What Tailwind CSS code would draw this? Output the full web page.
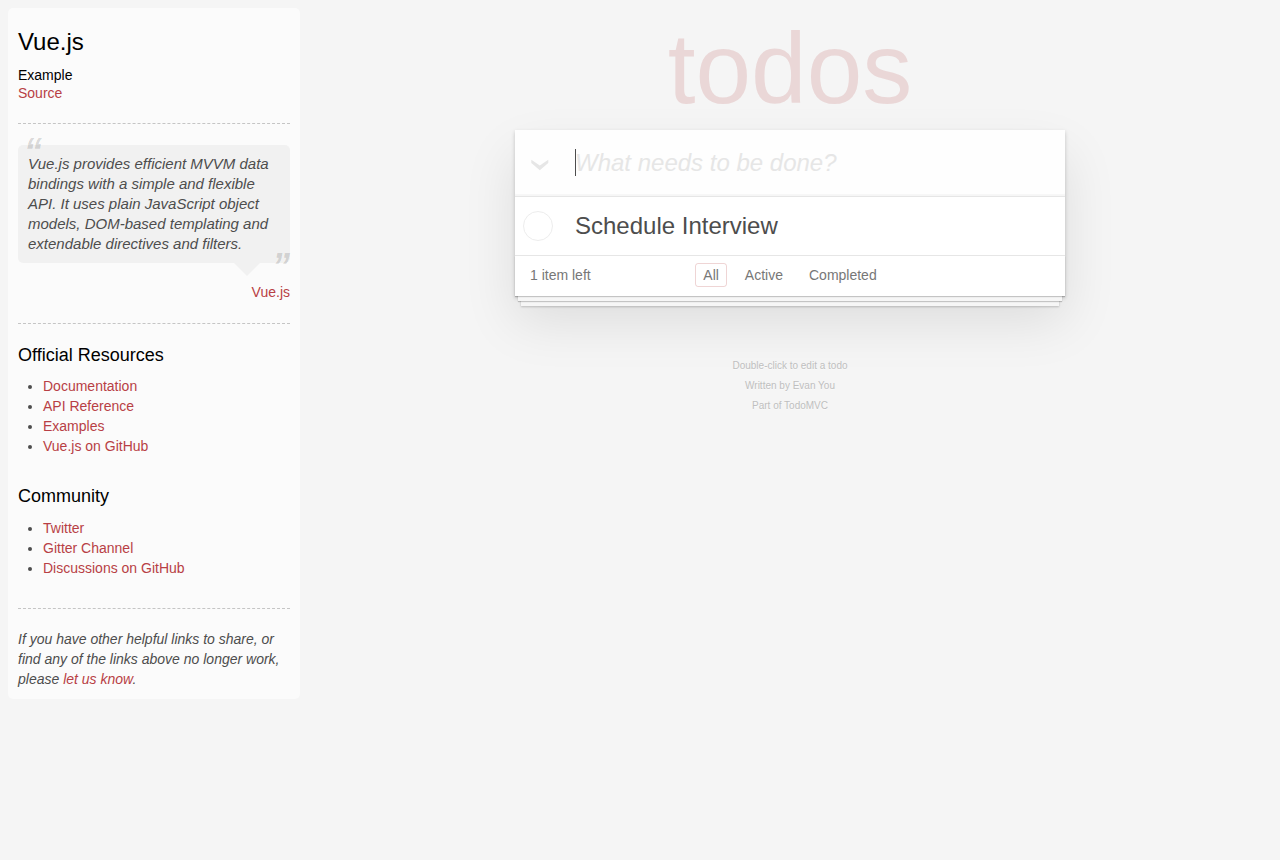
<!DOCTYPE html>
<html lang="en">
<head>
<meta charset="utf-8">
<meta name="viewport" content="width=device-width, initial-scale=1">
<title>Vue.js • TodoMVC</title>
<script src="https://cdn.jsdelivr.net/npm/@tailwindcss/browser@4"></script>
</head>
<body class="flex min-h-screen items-start bg-[#f5f5f5] font-['Liberation_Sans',Arial,sans-serif] text-sm text-[#4d4d4d]">

<aside class="mt-2 ml-2 w-[292px] shrink-0 rounded-[5px] bg-white/60 px-[10px] pt-5 pb-[10px]">
  <header>
    <h3 class="text-2xl leading-7 text-black">Vue.js</h3>
    <h5 class="mt-[10px] leading-[18px] text-black">Example</h5>
    <a href="#source" class="block leading-[18px] text-[#b83f45]">Source</a>
  </header>
  <hr class="my-[21px] border-t border-dashed border-[#c5c5c5]">
  <blockquote class="relative rounded-[5px] bg-black/4 px-[10px] py-[9px] text-[15px] leading-5 italic">
    <span aria-hidden="true" class="absolute -top-[3px] left-[6px] text-4xl leading-5 font-bold text-black/15">“</span>
    <p>Vue.js provides efficient MVVM data bindings with a simple and flexible API. It uses plain JavaScript object models, DOM-based templating and extendable directives and filters.</p>
    <span aria-hidden="true" class="absolute right-0 -bottom-[14px] text-4xl leading-5 font-bold text-black/15">”</span>
    <span aria-hidden="true" class="absolute top-full right-[30px] size-0 border-x-13 border-t-13 border-x-transparent border-t-black/4"></span>
  </blockquote>
  <p class="mt-[19px] text-right leading-5"><a href="#vue" class="text-[#b83f45]">Vue.js</a></p>
  <hr class="mt-[21px] mb-5 border-t border-dashed border-[#c5c5c5]">
  <h4 class="text-lg leading-[22px] text-black">Official Resources</h4>
  <ul class="mt-[10px] list-disc pl-[25px] leading-5">
    <li><a href="#docs" class="text-[#b83f45]">Documentation</a></li>
    <li><a href="#api" class="text-[#b83f45]">API Reference</a></li>
    <li><a href="#examples" class="text-[#b83f45]">Examples</a></li>
    <li><a href="#github" class="text-[#b83f45]">Vue.js on GitHub</a></li>
  </ul>
  <h4 class="mt-[29px] text-lg leading-[22px] text-black">Community</h4>
  <ul class="mt-[11px] list-disc pl-[25px] leading-5">
    <li><a href="#twitter" class="text-[#b83f45]">Twitter</a></li>
    <li><a href="#gitter" class="text-[#b83f45]">Gitter Channel</a></li>
    <li><a href="#discussions" class="text-[#b83f45]">Discussions on GitHub</a></li>
  </ul>
  <hr class="mt-[30px] mb-5 border-t border-dashed border-[#c5c5c5]">
  <p class="leading-5 italic">If you have other helpful links to share, or find any of the links above no longer work, please <a href="#issues" class="text-[#b83f45]">let us know</a>.</p>
</aside>

<div class="min-w-0 flex-1">
  <main class="mx-auto max-w-[550px] pt-[18px]">
    <h1 class="text-center text-[100px] leading-[100px] text-[#af2f2f]/15">todos</h1>

    <section class="relative mt-3 bg-white shadow-[0_2px_4px_rgba(0,0,0,0.2),0_25px_50px_rgba(0,0,0,0.1)]">
      <header class="relative">
        <input type="text" aria-label="New todo" placeholder="What needs to be done?" class="block h-[66px] w-full bg-black/[0.003] pr-4 pl-[60px] text-2xl shadow-[inset_0_-2px_1px_rgba(0,0,0,0.03)] outline-none placeholder:text-[#e6e6e6] placeholder:italic">
        <span aria-hidden="true" class="absolute top-[19px] left-[60px] h-[27px] w-px bg-[#4d4d4d]"></span>
        <label class="absolute top-[29px] left-4 block h-3 w-[18px] cursor-pointer">
          <input type="checkbox" aria-label="Mark all as complete" class="absolute inset-0 appearance-none">
          <svg viewBox="0 0 18 12" class="block h-3 w-[18px]" fill="#e6e6e6" aria-hidden="true"><path d="M.3.8 8.8 6.4 17.3.8V4L8.8 11.2.3 4z"/></svg>
        </label>
      </header>

      <ul class="border-t border-[#e6e6e6]">
        <li class="flex h-[58px] items-center pl-2">
          <input id="todo-1" type="checkbox" class="size-[30px] shrink-0 appearance-none rounded-full border border-[#ededed]">
          <label for="todo-1" class="pl-[22px] text-2xl leading-7">Schedule Interview</label>
        </li>
      </ul>

      <footer class="relative grid grid-cols-[1fr_auto_1fr] items-center border-t border-[#e6e6e6] px-[15px] pt-[7px] pb-[9px] leading-4 text-[#777]">
        <div aria-hidden="true" class="pointer-events-none absolute inset-x-0 bottom-0 h-10 shadow-[0_1px_1px_rgba(0,0,0,0.2),0_8px_0_-3px_#f6f6f6,0_9px_1px_-3px_rgba(0,0,0,0.2),0_16px_0_-6px_#f6f6f6,0_17px_2px_-6px_rgba(0,0,0,0.2)]"></div>
        <span>1 item left</span>
        <ul class="flex gap-[10px]">
          <li><a href="#all" class="block rounded-[3px] border border-[#af2f2f]/20 px-[7px] py-[3px]">All</a></li>
          <li><a href="#active" class="block rounded-[3px] border border-transparent px-[7px] py-[3px]">Active</a></li>
          <li><a href="#completed" class="block rounded-[3px] border border-transparent px-[7px] py-[3px]">Completed</a></li>
        </ul>
      </footer>
    </section>

    <footer class="relative mt-[60px] text-center text-[10px] leading-5 text-[#bfbfbf] text-shadow-[0_1px_0_rgba(255,255,255,0.5)]">
      <p>Double-click to edit a todo</p>
      <p>Written by <a href="#author">Evan You</a></p>
      <p>Part of <a href="#todomvc">TodoMVC</a></p>
    </footer>
  </main>
</div>
</body>
</html>
